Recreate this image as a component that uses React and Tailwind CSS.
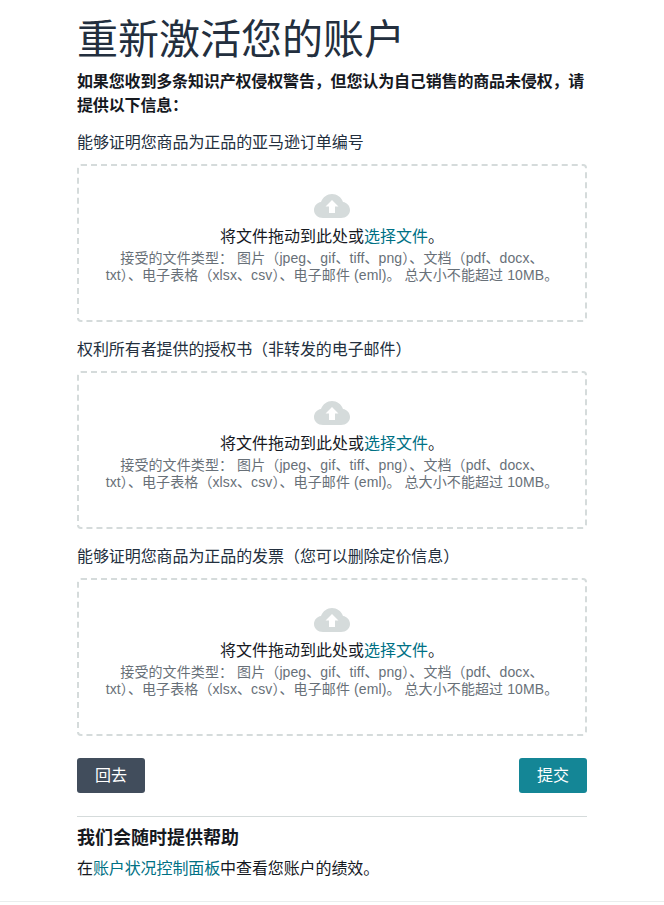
function CloudIcon() {
  return (
    <svg width="36" height="24" viewBox="0 0 36 24" className="block">
      <path fill="#d5dbdb" d="M9 24C4 24 0 20.5 0 16c0-4 3-7.400 7-8C8.800 3.200 13.200 0 18 0s9.400 3.200 11 8c4 .6 7 4 7 8 0 4.500-4 8-9 8z" />
      <path fill="#ffffff" d="M18 6l6.500 6.500H21V19h-6v-6.500h-3.500z" />
    </svg>
  );
}

function Drop({ label }) {
  return (
    <section className="flex flex-col">
      <label className="h-[24px] text-[16px] leading-[24px] tracking-[-0.08px] text-[#232f3e]">{label}</label>
      <div className="mt-[9px] flex h-[158px] flex-col items-center rounded-[4px] border-2 border-dashed border-[#d5dbdb] pt-[28px]">
        <CloudIcon />
        <p className="mt-[7px] text-[16px] leading-[24px] text-[#16191f]">
          将文件拖动到此处或<a className="text-[#007185]">选择文件</a>。
        </p>
        <p className="mt-[1px] whitespace-nowrap text-center text-[14px] leading-[17px] tracking-[0.1px] text-[#687078]">
          接受的文件类型： 图片（jpeg、gif、tiff、png）、文档（pdf、docx、
          <br />
          txt）、电子表格（xlsx、csv）、电子邮件 (eml)。 总大小不能超过 10MB。
        </p>
      </div>
    </section>
  );
}

export default function App() {
  return (
    <div className="h-[905px] overflow-hidden bg-white font-['Liberation_Sans','Noto_Sans_CJK_SC',sans-serif]">
      <main className="ml-[77px] flex h-[901px] w-[510px] flex-col">
        <h1 className="mt-[15px] text-[41px] leading-[50px] text-[#232f3e]">重新激活您的账户</h1>
        <p className="mt-[5px] text-[16px] leading-[24px] font-bold tracking-[-0.15px] text-[#16191f] [text-spacing-trim:space-all]">
          如果您收到多条知识产权侵权警告，但您认为自己销售的商品未侵权，请提供以下信息：
        </p>
        <div className="mt-[13px] flex flex-col gap-[16px]">
          <Drop label="能够证明您商品为正品的亚马逊订单编号" />
          <Drop label="权利所有者提供的授权书（非转发的电子邮件）" />
          <Drop label="能够证明您商品为正品的发票（您可以删除定价信息）" />
        </div>
        <div className="mt-[22px] flex justify-between">
          <button className="h-[35px] w-[68px] rounded-[3px] bg-[#414d5c] text-[16px] text-white">回去</button>
          <button className="h-[35px] w-[68px] rounded-[3px] bg-[#148696] text-[16px] text-white">提交</button>
        </div>
        <hr className="mt-[23px] border-t border-[#d5dbdb]" />
        <h2 className="mt-[9px] text-[18px] leading-[24px] font-bold text-[#16191f]">我们会随时提供帮助</h2>
        <p className="mt-[7px] text-[16px] leading-[24px] tracking-[-0.1px] text-[#16191f]">
          在<a className="text-[#007185]">账户状况控制面板</a>中查看您账户的绩效。
        </p>
      </main>
      <div className="h-[1px] bg-[#eaeded]" />
    </div>
  );
}
